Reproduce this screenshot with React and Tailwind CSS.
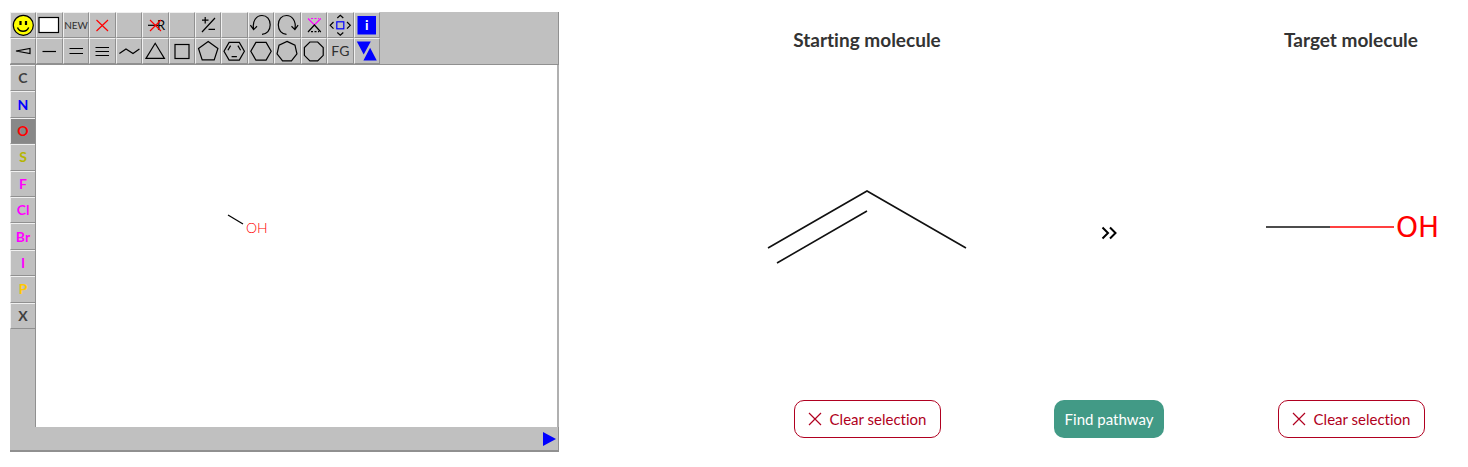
import React from "react";

function polygon(sides, radius, startDeg, cx = 13, cy = 13) {
  return Array.from({ length: sides }, (_, i) => {
    const a = ((startDeg + (360 / sides) * i) * Math.PI) / 180;
    return `${(cx + radius * Math.cos(a)).toFixed(2)},${(cy + radius * Math.sin(a)).toFixed(2)}`;
  }).join(" ");
}

function Icon({ children }) {
  return (
    <svg viewBox="0 0 26 26" className="absolute -top-px -left-px size-[26px]" fill="none" stroke="#000" strokeWidth="1.2" aria-hidden="true">
      {children}
    </svg>
  );
}

const topRow = [
  ["Smiles", <Icon><circle cx="13.3" cy="13.3" r="10" fill="#ff0" /><path d="M10.5 9v4M16 9v4" strokeWidth="2.2" /><path d="M7.5 15.5C9.5 20.5 16.5 20.5 18.7 15.5" strokeWidth="1.4" /></Icon>],
  ["Query", <Icon><rect x="3" y="5.5" width="19.5" height="15" fill="#fff" /></Icon>],
  ["New", <span className="text-[10px]">NEW</span>],
  ["Delete", <Icon><path d="M7.5 8l11.5 11M19 8L7.5 19" stroke="#f00" /></Icon>],
  ["Blank", null],
  ["Delete group", <Icon><path d="M6 13.3h10" /><text x="15" y="18" fontSize="13" fill="#000" stroke="none">R</text><path d="M8 8l11 11M19 8L8 19" stroke="#f00" /></Icon>],
  ["Unused", null],
  ["Charge", <Icon><path d="M7 8.2h6.5M10.2 5v6.5M7 20L20 6M13.5 17.4H20" /></Icon>],
  ["Spare", null],
  ["Undo", <Icon><path d="M5.6 17C4 9 8.5 3.5 14 3.5C19 3.5 22.2 7.5 22.2 12.8C22.2 18.5 18.8 22.3 14 22.3M2.4 13.2l3.2 4.4L9 14.3" /></Icon>],
  ["Redo", <Icon><path d="M20.9 17C22.5 9 18 3.5 12.5 3.5C7.5 3.5 4.3 7.5 4.3 12.8C4.3 18.5 7.7 22.3 12.5 22.3M24.1 13.2l-3.2 4.4L17.5 14.3" /></Icon>],
  ["Spiro", <Icon><path d="M7 6.5l6.4 6.5 6.4-6.5" stroke="#f0f" /><path d="M10 6.5h8" stroke="#f0f" strokeDasharray="2 1.5" /><path d="M7 20l6.4-7 6.4 7" /><path d="M10 19.7h8" strokeDasharray="2 1.5" /></Icon>],
  ["Move", <Icon><rect x="9.8" y="9.8" width="7" height="7" stroke="#00f" /><path d="M6.5 10L3.2 13.3l3.3 3.3M20 10l3.3 3.3L20 16.6M10.3 6l3-2.8 3 2.8M10.3 20.5l3 2.8 3-2.8" /></Icon>],
  ["Info", <Icon><rect x="3.5" y="4" width="18.5" height="18.5" fill="#00f" stroke="none" /><text x="12.8" y="18" fontSize="14" fontWeight="700" textAnchor="middle" fill="#fff" stroke="none">i</text></Icon>],
];

const bondRow = [
  ["Stereo bond", <Icon><path d="M6 13l14-2.5v5z" /></Icon>],
  ["Single bond", <Icon><path d="M6.5 13.5h13.5" /></Icon>],
  ["Double bond", <Icon><path d="M6.5 10.5H20M6.5 15.5H20" /></Icon>],
  ["Triple bond", <Icon><path d="M6.5 9.5H20M6.5 13.5H20M6.5 17.5H20" /></Icon>],
  ["Chain", <Icon><path d="M3.4 15.5L10 11l7 4.5 6.4-4.5" /></Icon>],
  ["Triangle ring", <Icon><path d="M4 20.4L13.2 5.3l9.2 15.1z" /></Icon>],
  ["Square ring", <Icon><rect x="6" y="6.5" width="14" height="14" /></Icon>],
  ["Pentagon ring", <Icon><polygon points={polygon(5, 10.2, -90, 13.2, 13.6)} /></Icon>],
  ["Benzene ring", <Icon><polygon points={polygon(6, 10.2, 0, 13.2, 13.3)} /><path d="M6.9 12.2L9.6 7.6M16.9 7.6l2.7 4.6M10.6 18.6h5.3" /></Icon>],
  ["Hexagon ring", <Icon><polygon points={polygon(6, 10.2, 0, 13, 13.3)} /></Icon>],
  ["Heptagon ring", <Icon><polygon points={polygon(7, 10.2, -90, 13, 13.6)} /></Icon>],
  ["Octagon ring", <Icon><polygon points={polygon(8, 10.2, 22.5, 12.8, 13.4)} /></Icon>],
  ["Functional groups", <span className="text-[14px]">FG</span>],
  ["Swap", <Icon><path d="M2.8 3.6h14L9.7 16.6zM16.1 9.8l6.7 12.8H9.4z" fill="#00f" stroke="none" /></Icon>],
];

const atoms = [
  ["C", "text-[#404040]"],
  ["N", "text-[#0000ff]"],
  ["O", "text-[#ff0000]"],
  ["S", "text-[#b5b500]"],
  ["F", "text-[#ff00ff]"],
  ["Cl", "text-[#ff00ff]"],
  ["Br", "text-[#ff00ff]"],
  ["I", "text-[#ff00ff]"],
  ["P", "text-[#ffc800]"],
  ["X", "text-[#404040]"],
];

const bevel = "border border-t-[#f0f0f0] border-l-[#f0f0f0] border-r-[#909090] border-b-[#909090]";

function Tool({ label, children }) {
  return (
    <button aria-label={label} className={`relative flex min-w-0 items-center justify-center leading-none text-[#303030] ${bevel}`}>
      {children}
    </button>
  );
}

function Editor() {
  return (
    <section aria-label="Molecule editor" className="flex w-[549px] flex-col bg-[#c0c0c0]">
      <div className="border-b border-r border-[#909090]">
        <div className="grid h-[52px] w-[370px] grid-cols-14 grid-rows-2">
          {[...topRow, ...bondRow].map(([label, icon]) => (
            <Tool key={label} label={label}>{icon}</Tool>
          ))}
        </div>
      </div>
      <div className="flex h-[362px]">
        <div className="w-[26px] border-r border-[#909090]">
          <div className="grid h-[264px] grid-rows-10">
            {atoms.map(([symbol, color]) => (
              <button
                key={symbol}
                className={`flex min-h-0 items-center justify-center border-t border-l border-b border-t-[#f0f0f0] border-l-[#f0f0f0] border-b-[#909090] text-[14px] leading-none font-bold ${color} ${symbol === "O" ? "bg-[#888888]" : ""}`}
              >
                {symbol}
              </button>
            ))}
          </div>
        </div>
        <div className="flex-1 border-r-2 border-[#b0b0b0] bg-white">
          <svg viewBox="0 0 521 362" className="h-[362px] w-full" role="img" aria-label="Methanol">
            <path d="M192 150l15 9" stroke="#000" strokeWidth="1.2" />
            <text x="210" y="168" fontSize="14" fill="#f00" className="font-light">OH</text>
          </svg>
        </div>
      </div>
      <div className="flex h-[25px] items-center justify-end border-r border-b-2 border-[#909090] pr-[2px]">
        <button aria-label="Menu">
          <svg viewBox="0 0 13 14" className="h-[14px] w-[13px]"><path d="M0 0l13 7-13 7z" fill="#00f" /></svg>
        </button>
      </div>
    </section>
  );
}

function ClearButton() {
  return (
    <button className="flex h-[38px] w-[147px] items-center justify-center gap-2 rounded-[10px] border border-[#b00020] text-[15px] text-[#b00020]">
      <svg viewBox="0 0 14 14" className="size-[14px]" fill="none" stroke="currentColor" strokeWidth="1.2" aria-hidden="true">
        <path d="M1 1l12 12M13 1L1 13" />
      </svg>
      Clear selection
    </button>
  );
}

function Molecule({ title, children }) {
  return (
    <section className="flex flex-col items-center justify-between">
      <h2 className="pt-4 text-[19px] leading-6 font-bold text-[#333]">{title}</h2>
      {children}
      <ClearButton />
    </section>
  );
}

export default function App() {
  return (
    <main className="grid grid-cols-[750fr_718fr] bg-white pt-3 font-['Lato','Liberation_Sans',sans-serif] [font-variant-ligatures:none]">
      <div className="pl-[10px]"><Editor /></div>
      <div className="grid grid-cols-[234fr_250fr_234fr] pb-[14px]">
        <Molecule title="Starting molecule">
          <svg viewBox="0 0 200 200" className="size-[200px]" fill="none" stroke="#111" strokeWidth="1.6" role="img" aria-label="Propene">
            <path d="M1 122L100 65l99 57M10 137l90-52" />
          </svg>
        </Molecule>
        <div className="flex flex-col items-center justify-end">
          <svg viewBox="0 0 16 14" className="mb-[160px] h-[14px] w-[16px]" fill="none" stroke="#000" strokeWidth="2" role="img" aria-label="to">
            <path d="M1.5 1.5L7 7l-5.5 5.500M9 1.5L14.5 7 9 12.5" />
          </svg>
          <button className="h-[38px] w-[110px] rounded-[10px] bg-[#429a86] text-[15px] text-white">Find pathway</button>
        </div>
        <Molecule title="Target molecule">
          <svg viewBox="0 0 200 200" className="size-[200px]" fill="none" strokeWidth="1.6" role="img" aria-label="Methanol">
            <path d="M15 101h64" stroke="#111" />
            <path d="M79 101h64" stroke="#f00" />
            <text x="145" y="111" fontSize="28" fill="#f00" className="font-['DejaVu_Sans',sans-serif]">OH</text>
          </svg>
        </Molecule>
      </div>
    </main>
  );
}
